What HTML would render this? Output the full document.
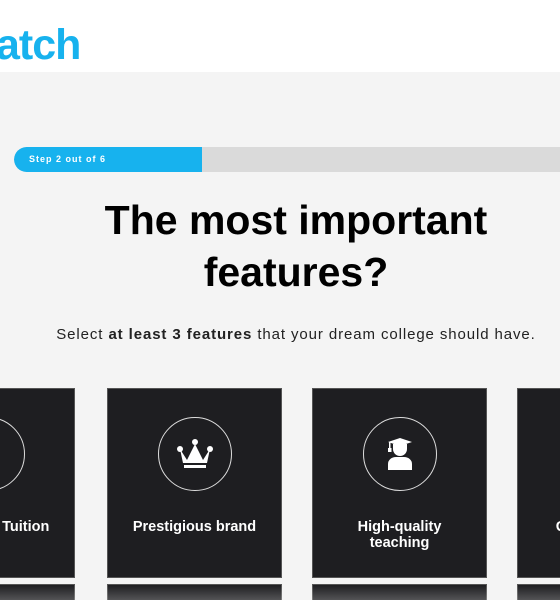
<!DOCTYPE html>
<html><head><meta charset="utf-8"><style>
*{margin:0;padding:0;box-sizing:border-box}
html,body{width:560px;height:600px;overflow:hidden;background:#f4f4f4;font-family:"Liberation Sans",sans-serif}
#w{position:relative;width:560px;height:600px;overflow:hidden}
.hdr{position:absolute;left:0;top:0;width:560px;height:72px;background:#fff}
.logo{position:absolute;left:-4px;top:20px;font-size:43px;font-weight:bold;color:#17b2ee;letter-spacing:-1px;line-height:50px}
.bar{position:absolute;left:14px;top:147px;width:560px;height:25px;background:#dadada;border-radius:13px 0 0 13px;overflow:hidden}
.fill{position:absolute;left:0;top:0;width:188px;height:25px;background:#17b2ee;border-radius:13px 0 0 13px;color:#fff;font-size:9px;font-weight:bold;letter-spacing:1px;line-height:25px;padding-left:15px}
h1{position:absolute;left:0;width:592px;top:194px;text-align:center;font-size:41px;line-height:52px;font-weight:bold;color:#000;letter-spacing:0px}
.sub{position:absolute;left:0;width:592px;top:326px;text-align:center;font-size:15px;color:#222;letter-spacing:0.9px}
.card{position:absolute;top:388px;width:175px;height:190px;background:#1e1e21;border:1px solid #555}
.card2{top:584px;height:40px}
.circ{position:absolute;left:50%;top:28px;width:74px;height:74px;margin-left:-37px;border:1.5px solid #ddd;border-radius:50%}
.circ svg{position:absolute;left:50%;top:50%;transform:translate(-50%,-50%)}
.lbl{position:absolute;left:0;right:0;top:130px;text-align:center;color:#fff;font-weight:bold;font-size:14.5px;line-height:16px}
.shade{position:absolute;left:0;top:585px;width:560px;height:15px;background:linear-gradient(rgba(244,244,244,0),rgba(244,244,244,0.25))}
</style></head><body><div id="w">
<div class="hdr"><div class="logo">atch</div></div>
<div class="bar"><div class="fill">Step 2 out of 6</div></div>
<h1>The most important<br>features?</h1>
<div class="sub">Select <b>at least 3 features</b> that your dream college should have.</div>

<div class="card" style="left:-100px"><div class="circ"><svg width="30" height="30" viewBox="0 0 30 30"><g fill="#fff"><rect x="-4" y="6" width="18" height="5" rx="2.5"/><rect x="-4" y="12" width="18" height="5" rx="2.5"/><rect x="-4" y="18" width="18" height="5" rx="2.5"/></g></svg></div><div class="lbl">Affordable Tuition</div></div>
<div class="card" style="left:107px"><div class="circ"><svg width="38" height="32" viewBox="0 0 38 32"><g fill="#fff"><circle cx="19" cy="4" r="3"/><circle cx="4" cy="11" r="3"/><circle cx="34" cy="11" r="3"/><path d="M4 11 L11 22 L19 6 L27 22 L34 11 L31 25 L7 25 Z"/><rect x="8" y="27" width="22" height="3"/></g></svg></div><div class="lbl">Prestigious brand</div></div>
<div class="card" style="left:312px"><div class="circ"><svg width="30" height="34" viewBox="0 0 30 34"><g fill="#fff"><path d="M3 5 L15 1 L27 5 L15 9 Z"/><rect x="4" y="5" width="1.5" height="7"/><rect x="3" y="11" width="3.5" height="4"/><path d="M8 7 h14 v5 a7 7 0 0 1 -14 0 Z"/><path d="M3 33 v-6 a8 7 0 0 1 8 -7 h8 a8 7 0 0 1 8 7 v6 Z"/></g></svg></div><div class="lbl">High-quality<br>teaching</div></div>
<div class="card" style="left:517px"><div class="circ"></div><div class="lbl">Great location</div></div>

<div class="card card2" style="left:-100px"></div>
<div class="card card2" style="left:107px"></div>
<div class="card card2" style="left:312px"></div>
<div class="card card2" style="left:517px"></div>
<div class="shade"></div>
</div></body></html>
